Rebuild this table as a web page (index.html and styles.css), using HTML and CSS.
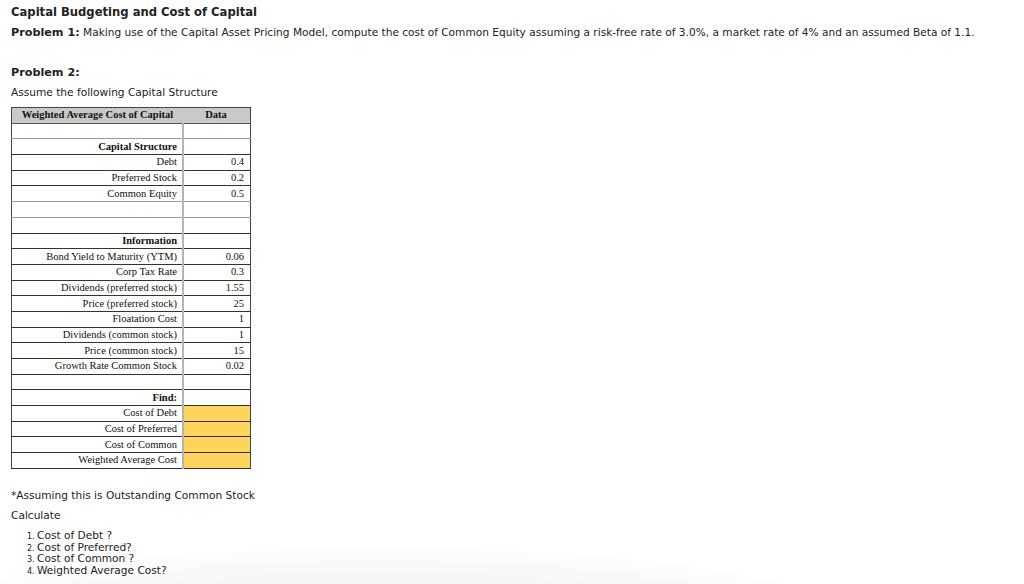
FILE: index.html
```html
<!DOCTYPE html>
<html>
<head>
<meta charset="utf-8">
<link rel="stylesheet" href="styles.css">
</head>
<body>
<div class="page">
  <h1 class="title">Capital Budgeting and Cost of Capital</h1>
  <p class="line p1"><b>Problem 1:</b> Making use of the Capital Asset Pricing Model, compute the cost of Common Equity assuming a risk-free rate of 3.0%, a market rate of 4% and an assumed Beta of 1.1.</p>
  <p class="line p2"><b>Problem 2:</b></p>
  <p class="line assume">Assume the following Capital Structure</p>
  <table class="wacc">
    <tr class="head"><th class="lab">Weighted Average Cost of Capital</th><th class="val">Data</th></tr>
    <tr class="lt"><td class="lab"></td><td class="val"></td></tr>
    <tr><td class="lab"><b>Capital Structure</b></td><td class="val"></td></tr>
    <tr><td class="lab">Debt</td><td class="val">0.4</td></tr>
    <tr><td class="lab">Preferred Stock</td><td class="val">0.2</td></tr>
    <tr class="lt"><td class="lab">Common Equity</td><td class="val">0.5</td></tr>
    <tr class="lt"><td class="lab"></td><td class="val"></td></tr>
    <tr><td class="lab"></td><td class="val"></td></tr>
    <tr><td class="lab"><b>Information</b></td><td class="val"></td></tr>
    <tr><td class="lab">Bond Yield to Maturity (YTM)</td><td class="val">0.06</td></tr>
    <tr><td class="lab">Corp Tax Rate</td><td class="val">0.3</td></tr>
    <tr><td class="lab">Dividends (preferred stock)</td><td class="val">1.55</td></tr>
    <tr><td class="lab">Price (preferred stock)</td><td class="val">25</td></tr>
    <tr><td class="lab">Floatation Cost</td><td class="val">1</td></tr>
    <tr><td class="lab">Dividends (common stock)</td><td class="val">1</td></tr>
    <tr><td class="lab">Price (common stock)</td><td class="val">15</td></tr>
    <tr><td class="lab">Growth Rate Common Stock</td><td class="val">0.02</td></tr>
    <tr><td class="lab"></td><td class="val"></td></tr>
    <tr><td class="lab"><b>Find:</b></td><td class="val"></td></tr>
    <tr><td class="lab">Cost of Debt</td><td class="val yel"></td></tr>
    <tr><td class="lab">Cost of Preferred</td><td class="val yel"></td></tr>
    <tr><td class="lab">Cost of Common</td><td class="val yel"></td></tr>
    <tr><td class="lab">Weighted Average Cost</td><td class="val yel"></td></tr>
  </table>
  <p class="line note">*Assuming this is Outstanding Common Stock</p>
  <p class="line">Calculate</p>
  <ol class="calc">
    <li><span class="num">1.</span>Cost of Debt ?</li>
    <li><span class="num">2.</span>Cost of Preferred?</li>
    <li><span class="num">3.</span>Cost of Common ?</li>
    <li><span class="num">4.</span>Weighted Average Cost?</li>
  </ol>
</div>
<div class="shade"></div>
</body>
</html>
```
FILE: styles.css
```css
html, body {
  margin: 0;
  padding: 0;
  background: #fff;
}
body {
  font-family: "DejaVu Sans", Verdana, sans-serif;
  font-size: 10.6px;
  color: #222;
  width: 1024px;
  height: 584px;
  overflow: hidden;
  position: relative;
}
.page {
  padding: 5px 11px 0;
}
.title {
  font-size: 11.6px;
  line-height: 14px;
  font-weight: bold;
  margin: 0;
}
.line {
  margin: 6px 0 0;
  line-height: 14px;
  white-space: nowrap;
}
.line b {
  font-size: 11.2px;
}
.p2 { margin-top: 25px; }
.assume { margin-top: 5px; }
.wacc {
  margin-top: 8px;
  border-collapse: collapse;
  font-family: "Liberation Serif", "Times New Roman", serif;
  font-size: 10.5px;
  color: #111;
  width: 240px;
  border: 1px solid #444;
}
.wacc tr { height: 15.7px; }
.wacc td, .wacc th {
  padding: 0 5px;
  line-height: 12px;
  border-bottom: 1px solid #333;
}
.wacc tr.lt td { border-bottom-color: #999; }
.wacc .lab {
  width: 160px;
  text-align: right;
  border-right: 2px solid #b4b4b4;
}
.wacc .val {
  text-align: right;
  padding-right: 6px;
}
.wacc .head th {
  background: #c9c9c9;
  font-weight: bold;
  text-align: center;
  border-bottom: 1px solid #555;
  border-right: none;
}
.wacc .yel { background: #ffd45c; }
.note { margin-top: 19px; }
.calc {
  list-style: none;
  margin: 8px 0 0;
  padding: 0 0 0 16px;
}
.calc li {
  line-height: 11.7px;
  white-space: nowrap;
}
.num {
  display: inline-block;
  font-size: 8px;
  line-height: 8px;
  width: 10px;
}
.shade {
  position: absolute;
  left: -100px;
  bottom: -30px;
  width: 960px;
  height: 70px;
  background: radial-gradient(ellipse at 50% 100%, rgba(0,0,0,0.06) 0%, rgba(0,0,0,0.03) 45%, rgba(0,0,0,0) 70%);
  pointer-events: none;
}
```
